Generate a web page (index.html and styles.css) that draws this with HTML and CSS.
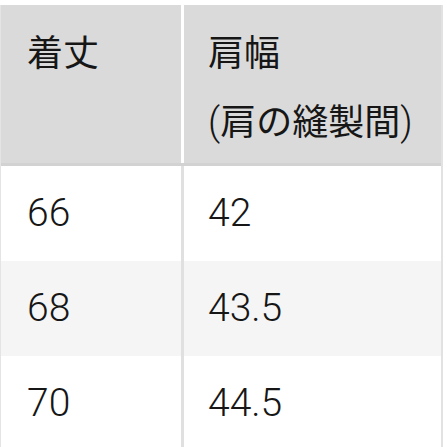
FILE: index.html
```html
<!DOCTYPE html>
<html lang="ja">
<head>
<meta charset="utf-8">
<link rel="stylesheet" href="styles.css">
</head>
<body>
<div class="table">
  <div class="row head">
    <div class="cell">着丈</div>
    <div class="cell">肩幅<br><span class="paren">(</span>肩の縫製間<span class="paren">)</span></div>
  </div>
  <div class="row body">
    <div class="cell num">66</div>
    <div class="cell num">42</div>
  </div>
  <div class="row body alt">
    <div class="cell num">68</div>
    <div class="cell num">43.5</div>
  </div>
  <div class="row body">
    <div class="cell num">70</div>
    <div class="cell num">44.5</div>
  </div>
</div>
</body>
</html>
```

FILE: styles.css
```css
html, body {
  margin: 0;
  padding: 0;
  background: #ffffff;
}
body {
  padding-top: 5px;
  font-family: "Noto Sans CJK JP", "Noto Sans", sans-serif;
  font-weight: 400;
  color: #161616;
  font-size: 36px;
}
.table {
  width: 443px;
  box-sizing: border-box;
  border-left: 1px solid #e4e4e4;
  border-right: 2px solid #e2e2e2;
}
.row {
  display: grid;
  grid-template-columns: 180px 1fr;
  column-gap: 3px;
}
.head {
  background: #ffffff;
  border-bottom: 3px solid #d2d2d2;
}
.head .cell {
  background: #dadada;
  line-height: 69px;
  padding-top: 11px;
  height: 147px;
  box-sizing: content-box;
}
.paren {
  font-family: "Roboto", sans-serif;
  font-weight: 300;
  font-size: 38px;
}
.body {
  background: #e0e0e0;
}
.body .cell {
  background: #ffffff;
  height: 95px;
  display: flex;
  align-items: center;
  line-height: 1;
}
.body.alt .cell {
  background: #f5f5f5;
}
.num {
  font-family: "Roboto", sans-serif;
  font-weight: 300;
  font-size: 39px;
}
.cell {
  padding-left: 26px;
}
.cell + .cell {
  padding-left: 24px;
}
```
